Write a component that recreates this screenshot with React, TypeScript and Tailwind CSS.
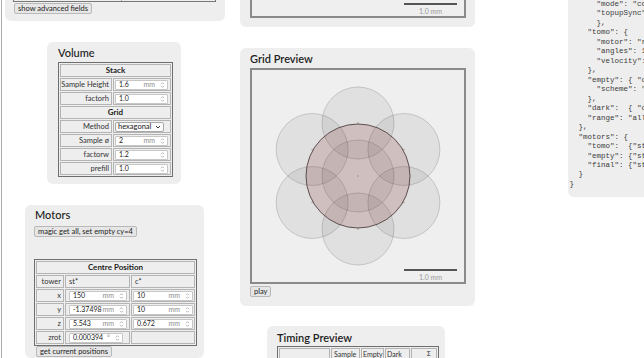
import React from "react";

const Spin = () => (
  <svg width="9" height="8" viewBox="0 0 9 8" className="shrink-0">
    <path d="M3 3.2 L4.5 1.7 L6 3.2 M3 4.8 L4.5 6.3 L6 4.8" fill="none" stroke="#a3a3a3" strokeWidth="0.8" />
  </svg>
);

function NumBox({ value, unit, w }: { value: string; unit?: string; w: string }) {
  return (
    <div className={`${w} h-[10px] bg-white border border-[#c6c6c6] rounded-[1px] flex items-center pl-[3px] text-[7px] leading-none text-[#222] whitespace-nowrap`}>
      <span className="flex-1 overflow-hidden">{value}</span>
      {unit && <span className="text-[#8c8c8c] mr-[3px]">{unit}</span>}
      <Spin />
    </div>
  );
}

const Btn = ({ children, className = "" }: { children: React.ReactNode; className?: string }) => (
  <div className={`h-[11px] px-[3px] bg-[#e6e6e6] border border-[#b9b9b9] rounded-[2px] text-[7.5px] leading-[9px] text-[#222] whitespace-nowrap w-fit ${className}`}>
    {children}
  </div>
);

const Head = ({ children }: { children: React.ReactNode }) => (
  <div className="h-[13px] border border-[#b4b4b4] text-center font-bold text-[8px] leading-[11px] text-[#222]">
    {children}
  </div>
);

function VRow({ label, children }: { label: string; children: React.ReactNode }) {
  return (
    <div className="flex gap-px h-[13px]">
      <div className="w-[52px] border border-[#b4b4b4] text-right pr-[2px] text-[7.5px] leading-[11px] text-[#333] whitespace-nowrap">{label}</div>
      <div className="w-[58px] border border-[#b4b4b4] flex items-center pl-px">{children}</div>
    </div>
  );
}

function MRow({ label, st, c }: { label: string; st: React.ReactNode; c: React.ReactNode }) {
  return (
    <div className="flex gap-px h-[13px] text-[7.5px] leading-[11px] text-[#333]">
      <div className="w-[28px] border border-[#b4b4b4] text-right pr-[2px]">{label}</div>
      <div className="w-[65px] border border-[#b4b4b4] flex items-center pl-[3px]">{st}</div>
      <div className="w-[64px] border border-[#b4b4b4] flex items-center pl-px">{c}</div>
    </div>
  );
}

const ScaleBar = () => (
  <div className="absolute right-[7px] bottom-px flex flex-col items-center">
    <div className="w-[53px] h-[2px] bg-[#555]" />
    <div className="mt-[2px] text-[7px] leading-[8px] text-[#9a9a9a]">1.0 mm</div>
  </div>
);

const ring: [number, number][] = [
  [0, 0],
  [0, -53],
  [0, 53],
  [-45.9, -26.5],
  [45.9, -26.5],
  [-45.9, 26.5],
  [45.9, 26.5],
];

const GridPlot = () => (
  <svg width="212" height="212" viewBox="0 0 212 212">
    {ring.map(([dx, dy], i) => (
      <circle key={i} cx={106 + dx} cy={106 + dy} r="36" fill="rgba(0,0,0,0.06)" stroke="rgba(0,0,0,0.2)" strokeWidth="0.8" />
    ))}
    <circle cx="106" cy="106" r="52" fill="rgba(140,60,60,0.2)" stroke="#5e4f4f" strokeWidth="1" />
    {ring.map(([dx, dy], i) => (
      <circle key={"d" + i} cx={106 + dx} cy={106 + dy} r="0.7" fill="rgba(120,60,60,0.5)" />
    ))}
  </svg>
);

const json = `      "mode": "continuous",
      "topupSync": true
      },
    "tomo": {
      "motor": "rot",
      "angles": 1800,
      "velocity": 20
    },
    "empty": { "count": 20,
      "scheme": "before"
    },
    "dark":  { "count": 20 },
    "range": "all"
  },
  "motors": {
    "tomo":  {"st": 150, "c": 10},
    "empty": {"st": 150, "c": 30},
    "final": {"st": 150, "c": 10}
  }
}`;

export default function App() {
  return (
    <div className="w-[644px] h-[358px] overflow-hidden bg-white flex items-start font-['Lato',sans-serif] text-[#222]">
      {/* left column */}
      <div className="ml-px w-[229px] shrink-0 h-[358px] border-l border-[#ababab] flex flex-col items-start">
        <div className="ml-[3px] w-[220px] h-[22px] bg-[#eeeeee] rounded-b-md pl-[8px]">
          <div className="flex h-[2px] w-[203px] border-x border-b border-[#777]">
            <div className="w-[108px] border-r border-[#aaa]" />
          </div>
          <Btn className="mt-px ml-px">show advanced fields</Btn>
        </div>

        <div className="mt-[21px] ml-[45px] w-[134px] bg-[#eeeeee] rounded-md pt-[4px] pb-[7px] pl-[11px]">
          <div className="h-[14px] text-[11px] leading-[14px] font-medium">Volume</div>
          <div className="mt-[2px] w-fit flex flex-col gap-px p-px border border-[#6e6e6e]">
            <Head>Stack</Head>
            <VRow label="Sample Height"><NumBox w="w-[53px]" value="1.6" unit="mm" /></VRow>
            <VRow label="factorh"><NumBox w="w-[53px]" value="1.0" /></VRow>
            <Head>Grid</Head>
            <VRow label="Method">
              <div className="w-[49px] h-[10px] bg-[#fafafa] border border-[#a9a9a9] rounded-[2px] flex items-center justify-between px-[2px] text-[7.5px] leading-none text-[#222]">
                <span>hexagonal</span>
                <svg width="6" height="4" viewBox="0 0 6 4"><path d="M1 1 L3 3 L5 1" fill="none" stroke="#333" strokeWidth="1" /></svg>
              </div>
            </VRow>
            <VRow label="Sample ø"><NumBox w="w-[53px]" value="2" unit="mm" /></VRow>
            <VRow label="factorw"><NumBox w="w-[53px]" value="1.2" /></VRow>
            <VRow label="prefill"><NumBox w="w-[53px]" value="1.0" /></VRow>
          </div>
        </div>

        <div className="mt-[21px] ml-[23px] w-[179px] h-[160px] bg-[#eeeeee] rounded-md pt-[3px] pl-[9px]">
          <div className="ml-px h-[14px] text-[11px] leading-[14px] font-medium">Motors</div>
          <Btn className="mt-[4px]">magic get all, set empty cy=4</Btn>
          <div className="mt-[22px] w-fit flex flex-col gap-px p-px border border-[#6e6e6e]">
            <Head>Centre Position</Head>
            <MRow label="tower" st={<span>st*</span>} c={<span className="pl-[2px]">c*</span>} />
            <MRow label="x" st={<NumBox w="w-[58px]" value="150" unit="mm" />} c={<NumBox w="w-[60px]" value="10" unit="mm" />} />
            <MRow label="y" st={<NumBox w="w-[58px]" value="-1.37498" unit="mm" />} c={<NumBox w="w-[60px]" value="10" unit="mm" />} />
            <MRow label="z" st={<NumBox w="w-[58px]" value="5.543" unit="mm" />} c={<NumBox w="w-[60px]" value="0.672" unit="mm" />} />
            <MRow label="zrot" st={<NumBox w="w-[54px]" value="0.000394" unit="°" />} c={null} />
          </div>
          <Btn className="ml-[2px]">get current positions</Btn>
        </div>
      </div>

      {/* middle column */}
      <div className="ml-[10px] w-[235px] shrink-0 flex flex-col items-start">
        <div className="w-[235px] h-[27px] bg-[#eeeeee] rounded-b-md pl-[10px]">
          <div className="relative w-[216px] h-[18px] border-2 border-t-0 border-[#8a8a8a] bg-[#efefef]">
            <ScaleBar />
          </div>
        </div>

        <div className="mt-[21px] w-[235px] bg-[#eeeeee] rounded-md pt-[4px] pb-[9px] pl-[10px]">
          <div className="h-[14px] text-[11px] leading-[14px] font-semibold">Grid Preview</div>
          <div className="relative mt-[2px] w-[216px] h-[216px] border-2 border-[#8a8a8a] bg-[#efefef]">
            <GridPlot />
            <ScaleBar />
          </div>
          <Btn className="mt-[2px]">play</Btn>
        </div>

        <div className="mt-[20px] ml-[27px] w-[178px] h-[60px] bg-[#eeeeee] rounded-md pt-[5px] pl-[10px]">
          <div className="h-[14px] text-[11px] leading-[14px] font-semibold">Timing Preview</div>
          <div className="mt-px w-fit flex flex-col gap-px p-px border border-[#6e6e6e] text-[7px] leading-[11px] text-[#333]">
            <div className="flex gap-px h-[13px]">
              <div className="w-[51px] border border-[#b4b4b4]" />
              <div className="w-[29px] border border-[#b4b4b4] pl-[2px]">Sample</div>
              <div className="w-[23px] border border-[#b4b4b4] pl-px">Empty</div>
              <div className="w-[25px] border border-[#b4b4b4] pl-px">Dark</div>
              <div className="w-[26px] border border-[#b4b4b4] text-right pr-[5px] font-['DejaVu_Sans_Mono',monospace]">Σ</div>
            </div>
            <div className="flex gap-px h-[13px]">
              <div className="w-[51px] border border-[#b4b4b4]" />
              <div className="w-[29px] border border-[#b4b4b4]" />
              <div className="w-[23px] border border-[#b4b4b4]" />
              <div className="w-[25px] border border-[#b4b4b4]" />
              <div className="w-[26px] border border-[#b4b4b4]" />
            </div>
          </div>
        </div>
      </div>

      {/* right column: config json */}
      <div className="ml-[93px] w-[110px] h-[197px] shrink-0 bg-[#eeeeee] rounded-bl-md overflow-hidden">
        <pre className="pl-[1.5px] font-['Liberation_Mono',monospace] text-[7.5px] leading-[9.47px] text-[#3c3c3c] whitespace-pre">
{json}
        </pre>
      </div>
    </div>
  );
}
